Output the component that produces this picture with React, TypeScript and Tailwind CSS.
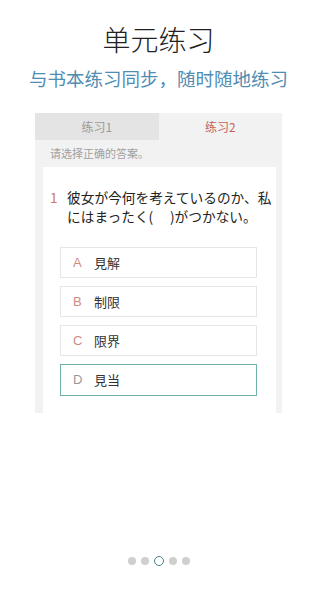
const cjk = { fontFamily: '"Noto Sans CJK SC", "Noto Sans", sans-serif' };
const jp = { fontFamily: '"Noto Sans CJK JP", "Noto Sans CJK SC", sans-serif' };

const options = [
  { key: "A", text: "見解" },
  { key: "B", text: "制限" },
  { key: "C", text: "限界" },
  { key: "D", text: "見当", active: true },
];

export default function App() {
  return (
    <div className="w-[329px] h-[597px] bg-white overflow-hidden pr-[12px]" style={cjk}>
      <div className="flex flex-col items-center">
        <h1 className="mt-[19px] h-[40px] leading-[40px] text-center text-[28px] font-light text-[#222]">
          单元练习
        </h1>
        <p className="mt-[7px] h-[24px] leading-[24px] text-center text-[18.5px] text-[#4f8db3] whitespace-nowrap">
          与书本练习同步，随时随地练习
        </p>

        <div className="mt-[23px] w-[247px] h-[300px] bg-[#f2f2f2] flex flex-col">
          <div className="flex h-[27px] text-[12px]">
            <div className="flex-1 bg-[#e4e4e4] flex items-center justify-center text-[#9a9a9a]">练习1</div>
            <div className="flex-1 bg-[#f2f2f2] flex items-center justify-center text-[#c0635e]">练习2</div>
          </div>
          <div className="h-[27px] flex items-center pl-[15px] text-[11px] text-[#a0a0a0]">请选择正确的答案。</div>
          <div className="flex-1 ml-2 mr-[6px] bg-white pt-[21px]" style={jp}>
            <div className="flex pl-[7px] pr-[2px] text-[13.7px] leading-[19px] text-[#222]">
              <span className="w-[17px] shrink-0 text-[#d2775a]">1</span>
              <span>
                彼女が今何を考えているのか、私
                <br />
                にはまったく(　 )がつかない。
              </span>
            </div>
            <div className="mt-[21px] ml-[17px] mr-[19px] flex flex-col gap-[8px]">
              {options.map((o) => (
                <div
                  key={o.key}
                  className={
                    o.active
                      ? "h-[32px] flex items-center border border-[#6fb0ad] text-[13px]"
                      : "h-[31px] flex items-center border border-[#e6e6e6] text-[13px]"
                  }
                >
                  <span
                    className={o.active ? "w-[33px] pl-[12px] text-[#999]" : "w-[33px] pl-[12px] text-[#d08a86]"}
                    style={{ fontFamily: '"Liberation Sans", sans-serif' }}
                  >
                    {o.key}
                  </span>
                  <span className="text-[#333]">{o.text}</span>
                </div>
              ))}
            </div>
          </div>
        </div>

        <div className="mt-[143px] flex items-center justify-center gap-[5px]">
          <span className="w-[8px] h-[8px] rounded-full bg-[#cfcfcf]" />
          <span className="w-[8px] h-[8px] rounded-full bg-[#cfcfcf]" />
          <span className="w-[10px] h-[10px] rounded-full border border-[#4d7f8a]" />
          <span className="w-[8px] h-[8px] rounded-full bg-[#cfcfcf]" />
          <span className="w-[8px] h-[8px] rounded-full bg-[#cfcfcf]" />
        </div>
      </div>
    </div>
  );
}
